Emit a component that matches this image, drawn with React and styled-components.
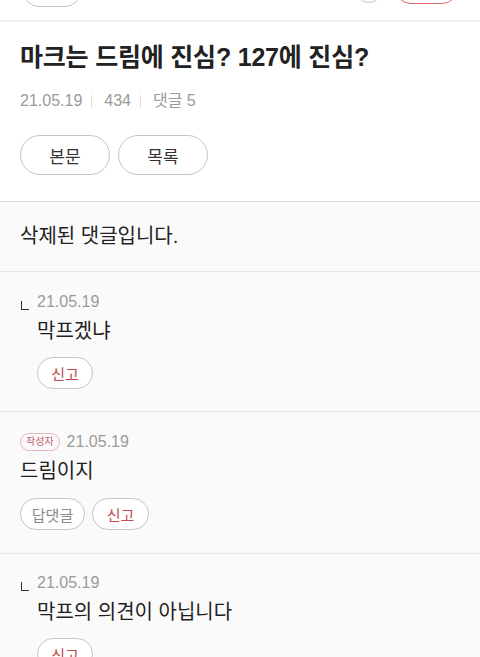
import React from 'react';
import styled, { createGlobalStyle } from 'styled-components';

const GlobalStyle = createGlobalStyle`
  html, body { margin: 0; padding: 0; background: #fff; }
  body {
    font-family: "Liberation Sans", "Noto Sans CJK KR", sans-serif;
    color: #222;
    -webkit-font-smoothing: antialiased;
  }
`;

const Page = styled.div`
  width: 480px;
  min-height: 657px;
  background: #fafafa;
  overflow: hidden;
`;

const TopBar = styled.div`
  height: 20px;
  display: flex;
  align-items: flex-end;
  padding: 0 22px 0 23px;
  background: #fff;
  border-bottom: 2px solid #efefef;
  overflow: hidden;
`;

const TopPill = styled.div`
  flex: none;
  width: ${p => p.w}px;
  height: 32px;
  margin-bottom: ${p => p.lift}px;
  margin-left: ${p => p.ml || 0}px;
  border: 1px solid ${p => (p.red ? '#d86a6a' : '#c4c4c4')};
  border-radius: 16px;
  box-sizing: border-box;
`;

const Spacer = styled.div`
  flex: 1;
`;

const Head = styled.section`
  background: #fff;
  padding: 19px 20px 26px;
  border-bottom: 1px solid #dcdcdc;
`;

const Title = styled.h1`
  margin: 0;
  font-size: 25px;
  line-height: 32px;
  font-weight: 700;
  color: #222;
  letter-spacing: -0.2px;
`;

const Meta = styled.div`
  margin-top: 18px;
  display: flex;
  align-items: center;
  font-size: 16px;
  line-height: 20px;
  color: #9a9a9a;
`;

const Sep = styled.span`
  width: 1px;
  height: 13px;
  background: #ddd;
  margin: 0 12px 0 9px;
`;

const ButtonRow = styled.div`
  display: flex;
  gap: ${p => p.gap || 8}px;
  margin-top: ${p => p.mt || 0}px;
  padding-left: ${p => p.indent || 0}px;
`;

const Pill = styled.button`
  height: ${p => (p.big ? 40 : 32)}px;
  width: ${p => p.w}px;
  padding: 0;
  border: 1px solid #c6c6c6;
  border-radius: 20px;
  background: #fff;
  font-family: inherit;
  font-size: ${p => (p.big ? 17 : 15)}px;
  color: ${p => (p.red ? '#c0494f' : p.muted ? '#8a8a8a' : '#333')};
  box-sizing: border-box;
`;

const Comment = styled.section`
  padding: ${p => p.pad || '20px 20px 22px'};
  border-bottom: 1px solid #e6e6e6;
  background: #fafafa;
`;

const CommentMeta = styled.div`
  display: flex;
  align-items: center;
  height: 20px;
  font-size: 16px;
  color: #9a9a9a;
`;

const ReplyMark = styled.span`
  width: 7px;
  height: 8px;
  border-left: 1.5px solid #333;
  border-bottom: 1.5px solid #333;
  margin: 7px 8px 0 1px;
`;

const Badge = styled.span`
  height: 18px;
  padding: 0 5px;
  margin-right: 7px;
  border: 1px solid #e6b7bd;
  border-radius: 9px;
  font-size: 10px;
  line-height: 16px;
  color: #c4606c;
  box-sizing: border-box;
`;

const Body = styled.p`
  margin: 6px 0 0;
  padding-left: ${p => p.indent || 0}px;
  font-size: 20px;
  line-height: 26px;
  color: #1e1e1e;
`;

const Deleted = styled.p`
  margin: 0;
  font-size: 20px;
  line-height: 26px;
  color: #222;
`;

function Reply({ date, text, last }) {
  return (
    <Comment pad={last ? '19px 20px 0' : undefined}>
      <CommentMeta>
        <ReplyMark />
        {date}
      </CommentMeta>
      <Body indent={17}>{text}</Body>
      <ButtonRow mt={13} indent={17}>
        <Pill w={56} red>신고</Pill>
      </ButtonRow>
    </Comment>
  );
}

export default function App() {
  return (
    <Page>
      <GlobalStyle />
      <TopBar>
        <TopPill w={58} lift={13} />
        <Spacer />
        <TopPill w={28} lift={17} />
        <TopPill w={63} lift={16} ml={12} red />
      </TopBar>

      <Head>
        <Title>마크는 드림에 진심? 127에 진심?</Title>
        <Meta>
          <span>21.05.19</span>
          <Sep />
          <span>434</span>
          <Sep />
          <span>댓글 5</span>
        </Meta>
        <ButtonRow mt={24}>
          <Pill big w={90}>본문</Pill>
          <Pill big w={90}>목록</Pill>
        </ButtonRow>
      </Head>

      <Comment pad="21px 20px 22px">
        <Deleted>삭제된 댓글입니다.</Deleted>
      </Comment>

      <Reply date="21.05.19" text="막프겠냐" />

      <Comment pad="20px 20px 23px">
        <CommentMeta>
          <Badge>작성자</Badge>
          21.05.19
        </CommentMeta>
        <Body>드림이지</Body>
        <ButtonRow mt={14} gap={7}>
          <Pill w={65} muted>답댓글</Pill>
          <Pill w={57} red>신고</Pill>
        </ButtonRow>
      </Comment>

      <Reply date="21.05.19" text="막프의 의견이 아닙니다" last />
    </Page>
  );
}
